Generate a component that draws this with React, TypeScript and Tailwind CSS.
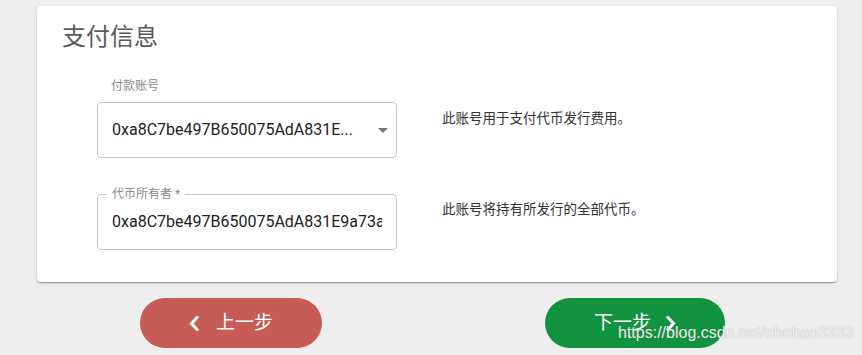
import React from "react";

const font = { fontFamily: 'Roboto, "Noto Sans CJK SC", sans-serif' };

function Chevron({ dir }: { dir: "left" | "right" }) {
  return (
    <svg width="10" height="15" viewBox="0 0 10 15" fill="none">
      <path
        d={dir === "left" ? "M8 1.5 2.5 7.5 8 13.5" : "M2 1.5 7.5 7.5 2 13.5"}
        stroke="white"
        strokeWidth="3"
        strokeLinecap="square"
      />
    </svg>
  );
}

export default function App() {
  return (
    <div className="relative w-[862px] h-[355px] bg-[#eeeeee] overflow-hidden" style={font}>
      {/* 卡片 */}
      <div className="ml-[37px] mt-[6px] w-[800px] h-[276px] bg-white rounded-[4px] shadow-[0_1px_3px_rgba(0,0,0,0.2),0_1px_1px_rgba(0,0,0,0.14),0_2px_1px_-1px_rgba(0,0,0,0.12)] pt-[15px] pl-[25px]">
        <h2 className="text-[24px] leading-[32px] text-[#5a5a5a] font-normal">支付信息</h2>

        <div className="ml-[35px] mt-[25px]">
          {/* 付款账号 */}
          <div className="ml-[14px] text-[12px] leading-[16px] text-[#8a8a8a]">付款账号</div>
          <div className="flex mt-[8px]">
            <div className="w-[300px] h-[56px] border border-[#c4c4c4] rounded-[4px] flex items-center pl-[14px] pr-[8px]">
              <span className="flex-1 text-[16px] text-[#222222] whitespace-nowrap">0xa8C7be497B650075AdA831E...</span>
              <svg width="10" height="5" viewBox="0 0 10 5">
                <path d="M0 0h10L5 5z" fill="#757575" />
              </svg>
            </div>
            <p className="ml-[45px] mt-[6px] text-[13.5px] leading-[20px] text-[#333333]">此账号用于支付代币发行费用。</p>
          </div>

          {/* 代币所有者 */}
          <div className="flex mt-[36px]">
            <div className="relative w-[300px] h-[56px] border border-[#c4c4c4] rounded-[4px] flex items-center pl-[14px] pr-[14px]">
              <span className="absolute -top-[9px] left-[9px] bg-white px-[5px] text-[12px] leading-[16px] text-[#8a8a8a]">
                代币所有者 *
              </span>
              <span className="text-[16px] text-[#222222] whitespace-nowrap overflow-hidden">
                0xa8C7be497B650075AdA831E9a73a1CF0e9B08e2
              </span>
            </div>
            <p className="ml-[45px] mt-[5px] text-[13.5px] leading-[20px] text-[#333333]">此账号将持有所发行的全部代币。</p>
          </div>
        </div>
      </div>

      {/* 按钮 */}
      <div className="flex mt-[16px]">
        <button className="ml-[140px] w-[182px] h-[50px] rounded-full bg-[#c75b55] flex items-center justify-center gap-[17px] text-white text-[19px]">
          <Chevron dir="left" />
          <span>上一步</span>
        </button>
        <button className="ml-[223px] w-[180px] h-[50px] rounded-full bg-[#10923e] flex items-center justify-center gap-[15px] text-white text-[19px]">
          <span>下一步</span>
          <Chevron dir="right" />
        </button>
      </div>

      <span
        className="absolute left-[618px] top-[323px] text-[16px] leading-[20px] text-white/85 [text-shadow:0_0_1px_rgba(110,110,110,0.7)]"
        style={{ fontFamily: '"Liberation Sans", Arial, sans-serif' }}
      >
        https://blog.csdn.net/shebao3333
      </span>
    </div>
  );
}
